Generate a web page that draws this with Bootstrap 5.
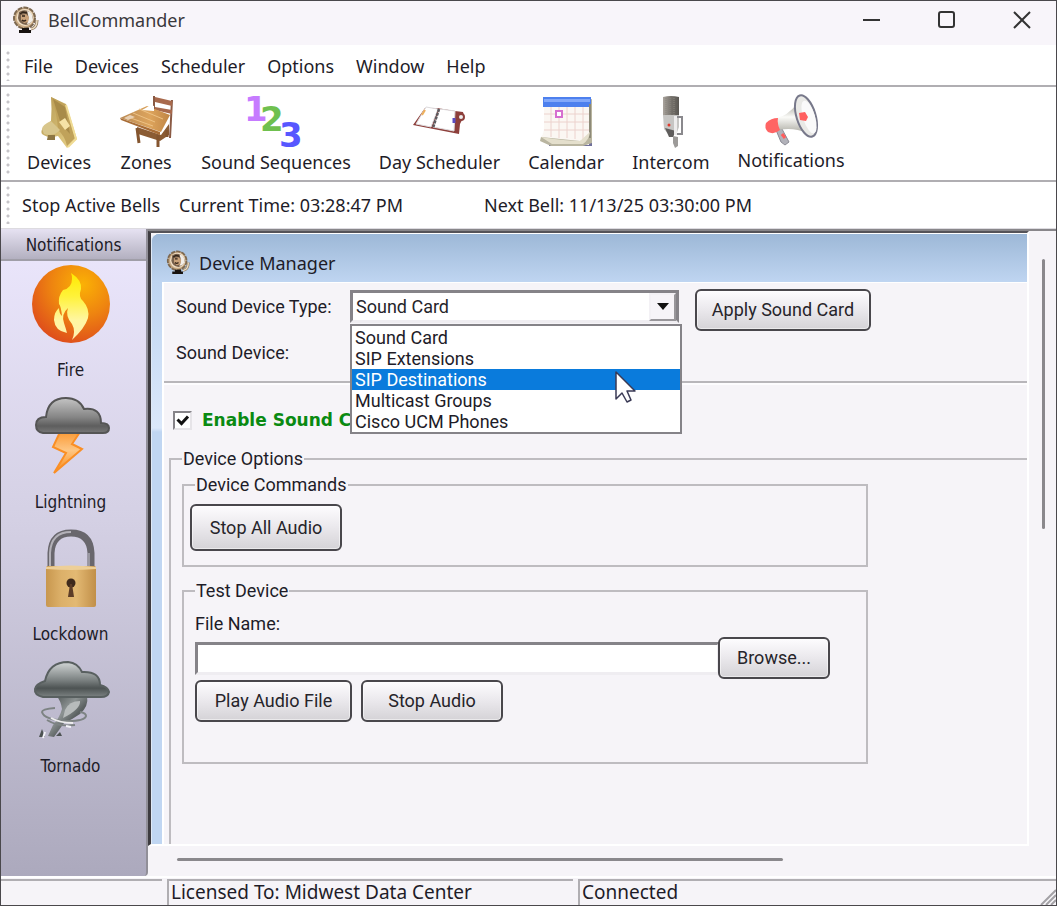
<!DOCTYPE html>
<html lang="en">
<head>
<meta charset="utf-8">
<meta name="viewport" content="width=device-width, initial-scale=1">
<title>BellCommander</title>
<link href="https://cdn.jsdelivr.net/npm/bootstrap@5.3.0/dist/css/bootstrap.min.css" rel="stylesheet">
<style>
  :root { --face: #f6f4f8; --ink: #1e1c28; }
  body { font-family: "Noto Sans", "Open Sans", sans-serif; font-size: 18px; line-height: 22px; color: var(--ink); background: var(--face); }
  button { color: inherit; }
  .app-window { border: 1px solid #4a484c; min-height: 100vh; }
  .title-strip { height: 44px; background: #f8f5fa; padding: 0 24px 6px 11px; color: #3a383c; }
  .caption-buttons { gap: 55px; }
  .flat { border: 0; background: none; padding: 0; text-decoration: none; color: inherit; white-space: nowrap; }
  .strip { background: #fff; border-bottom: 2px solid #b0aeb2; padding-left: 5px; }
  .grip { width: 4px; align-self: stretch; margin: 4px 0; background: radial-gradient(circle at 2px 2px, #c6c4c8 1px, #fff 2px) 0 0 / 4px 7px; }
  .menu-strip { height: 42px; gap: 22px; padding-top: 2px; }
  .menu-strip .grip { margin-right: -8px; }
  .tool-strip { height: 95px; gap: 28px; padding-top: 2px; }
  .tool-strip .grip { margin-right: -11px; }
  .tool-strip .flat svg { display: block; margin: 0 auto 3px; overflow: visible; }
  .info-strip { height: 47px; gap: 12px; border-bottom: 1px solid #dddbe0; }
  .info-strip .time-now { margin-left: 7px; }
  .info-strip .next-bell { margin-left: 69px; }

  .side-panel { width: 147px; border-right: 2px solid #918f98; background: linear-gradient(#ece7fd, #d4d0e4 45%, #aca9bd); font: 17px/22px "DejaVu Sans Condensed", "DejaVu Sans", sans-serif; border-bottom-right-radius: 4px; }
  .side-head { height: 32px; background: linear-gradient(#e6e2f2, #b3b0c0); border-bottom: 2px solid #a09ea8; padding-top: 5px; }
  .side-item { margin: 0 auto 15px; padding-right: 6px; }
  .side-item svg { display: block; margin: 0 auto 15px; }
  .side-list { padding-top: 3px; }

  .mdi-area { border-top: 2px solid #88868a; min-width: 0; }
  .mdi-client { border: 2px solid #fff; border-top-color: #555358; border-left: 3px solid #3d3b40; min-width: 0; }
  .v-scroll { width: 27px; padding: 28px 0 0 13px; }
  .v-scroll span { display: block; width: 3px; height: 270px; background: #8a888c; border-radius: 2px; }
  .h-scroll { height: 30px; padding: 12px 0 0 29px; }
  .h-scroll span { display: block; width: 606px; max-width: 70%; height: 3px; background: #8a888c; border-radius: 2px; }

  .child-window { border-top: 1px solid #fff; border-left: 1px solid #dfe9f6; border-top-left-radius: 8px; background: linear-gradient(#9db8d7, #bfd5f1 49px, #dbe8fa 194px, #c0d6f2 198px); }
  .child-title { height: 48px; padding: 13px 0 0 14px; background: linear-gradient(#9db8d7, #bfd5f1); border-top-left-radius: 7px; }
  .child-body { margin-left: 10px; background: var(--face); border: solid #fff; border-width: 1px 0 0 2px; font: 18px/22px Roboto, "Liberation Sans", sans-serif; }

  .form-top { padding: 6px 0 18px 12px; border-bottom: 2px solid #b8b6ba; }
  .form-grid { display: grid; grid-template-columns: 174px 329px; grid-template-rows: 34px 22px; row-gap: 18px; align-items: center; }
  .form-grid > label, .form-grid > span { padding-top: 2px; }
  .sunken { border: 3px solid; border-color: #858388 #efedf1 #efedf1 #858388; background: #fff; border-radius: 0; }
  .type-select { appearance: none; width: 100%; height: 33px; padding: 1px 3px 0; color: #26242a; border-color: #858388 #858388 #efedf1 #858388; }
  .drop-face { position: absolute; right: 3px; top: 3px; width: 27px; height: 28px; background: var(--face); border: 2px solid; border-color: #f3f1f5 #98969a #98969a #f3f1f5; pointer-events: none; display: grid; place-items: center; }
  .drop-list { position: absolute; top: 34px; left: 0; width: 332px; margin: 0; padding: 1px 0 0; list-style: none; background: #fff; border: 2px solid #858388; line-height: 21px; z-index: 5; }
  .drop-list li { padding-left: 3px; }
  .drop-list .chosen { background: #0a7bdc; color: #fff; }
  .pointer { position: absolute; top: 80px; left: 264px; z-index: 6; }

  .push { height: 42px; border: 2px solid #49474c; border-radius: 6px; background: linear-gradient(#fdfcfe, #eceaee 45%, #d5d3d7); box-shadow: inset 0 0 0 1px rgba(255,255,255,.5); padding: 0; color: #26242a; font: inherit; }
  .w-apply { width: 176px; margin-left: 16px; }
  .w-stopall { width: 152px; height: 47px; }
  .w-browse { width: 112px; margin-left: -2px; }
  .w-play { width: 157px; }
  .w-stop { width: 142px; }

  .form-bottom { padding: 24px 0 0 5px; border-top: 2px solid #fdfcfe; }
  .enable-row { gap: 10px; padding-left: 4px; height: 22px; margin-bottom: 17px; color: #0a8a12; font: bold 17px/22px "DejaVu Sans", sans-serif; }
  .tick { appearance: none; width: 19px; height: 19px; margin: 0; border: 2px solid; border-color: #858388 #e6e4e8 #e6e4e8 #858388; background: #fff url("data:image/svg+xml,%3Csvg xmlns='http://www.w3.org/2000/svg' viewBox='0 0 15 15'%3E%3Cpath d='M2.5 6.5l4 4 6.5-7' fill='none' stroke='%23111' stroke-width='3'/%3E%3C/svg%3E"); }
  fieldset { border: 2px solid #bebcc0; min-width: 0; }
  legend { float: none; width: auto; font-size: 18px; line-height: 22px; margin: 0; padding: 0 1px; }
  .outer-set { border-right: 0; border-bottom: 0; padding-left: 11px; }
  .inner-set { width: 686px; max-width: 100%; }
  .cmd-set { margin-top: 4px; padding: 8px 0 14px 6px; }
  .cmd-set legend { margin-left: 5px; }
  .test-set { margin-top: 13px; padding: 11px 36px 40px 11px; }
  .file-label { display: block; margin-bottom: 2px; }
  .file-box { height: 33px; min-width: 0; }
  .play-row { gap: 9px; margin-top: 1px; }

  .status-strip { height: 29px; font-size: 19px; line-height: 22px; border-top: 2px solid #fff; padding-top: 1px; gap: 5px; }
  .pane { border-top: 2px solid #b0aeb2; border-left: 2px solid #b0aeb2; padding-left: 2px; }
  .pane-a { width: 161px; border-left: 0; }
  .pane-b { width: 406px; }
</style>
</head>
<body>
<svg width="0" height="0" class="position-absolute" aria-hidden="true">
  <defs>
    <linearGradient id="gold" x1="0" x2="1" y1="0" y2="1"><stop offset="0" stop-color="#b79a55"/><stop offset=".5" stop-color="#cdb46c"/><stop offset="1" stop-color="#ecd58c"/></linearGradient>
    <linearGradient id="wood" x1="0" x2="1"><stop offset="0" stop-color="#b98a55"/><stop offset=".6" stop-color="#dda45c"/><stop offset="1" stop-color="#c08545"/></linearGradient>
    <linearGradient id="cloud" x1="0" x2="0" y1="0" y2="1"><stop offset="0" stop-color="#c4c4c4"/><stop offset=".55" stop-color="#858585"/><stop offset=".8" stop-color="#5e5e5e"/><stop offset="1" stop-color="#777"/></linearGradient>
    <linearGradient id="storm" x1="0" x2="0" y1="0" y2="1"><stop offset="0" stop-color="#d2d6d6"/><stop offset=".5" stop-color="#7e8484"/><stop offset=".75" stop-color="#4d5353"/><stop offset="1" stop-color="#7c8282"/></linearGradient>
    <linearGradient id="funnel" x1="0" x2="1" y1="0" y2="1"><stop offset="0" stop-color="#3f4545"/><stop offset=".4" stop-color="#8c9292"/><stop offset=".6" stop-color="#5a6060"/><stop offset="1" stop-color="#6d7373"/></linearGradient>
    <linearGradient id="bolt" x1="0" x2="0" y1="0" y2="1"><stop offset="0" stop-color="#fb9a35"/><stop offset=".45" stop-color="#fdc684"/><stop offset="1" stop-color="#fb8a14"/></linearGradient>
    <radialGradient id="fire" cx=".65" cy=".25" r=".8"><stop offset="0" stop-color="#fbb105"/><stop offset=".5" stop-color="#ee8410"/><stop offset="1" stop-color="#de4c1c"/></radialGradient>
    <linearGradient id="flame" x1="0" x2="0" y1="0" y2="1"><stop offset="0" stop-color="#ffe900"/><stop offset=".35" stop-color="#fff23a"/><stop offset=".7" stop-color="#fff6a0"/><stop offset="1" stop-color="#fff0b0"/></linearGradient>
    <linearGradient id="brass" x1="0" x2="1"><stop offset="0" stop-color="#c8974e"/><stop offset=".3" stop-color="#dcb069"/><stop offset=".6" stop-color="#e3b973"/><stop offset="1" stop-color="#c18f48"/></linearGradient>
    <linearGradient id="steel" x1="0" x2="1"><stop offset="0" stop-color="#aaa49d"/><stop offset=".5" stop-color="#77736d"/><stop offset="1" stop-color="#5a5752"/></linearGradient>
    <linearGradient id="horn" x1="0" x2="0" y1="0" y2="1"><stop offset="0" stop-color="#a9a89f"/><stop offset=".45" stop-color="#fbfbf8"/><stop offset="1" stop-color="#aeada4"/></linearGradient>
    <symbol id="bell-app" viewBox="0 0 28 28">
      <circle cx="12.500" cy="12" r="10.500" fill="#c8a982" stroke="#7d6850" stroke-width="2" stroke-dasharray="5 1"/>
      <circle cx="13" cy="11.500" r="8.500" fill="#f1dfc6"/>
      <path d="M7 6q4-3 9-1 5 3 5 8-2 5-7 6-7-1-8-7z" fill="#78614c"/>
      <path d="M15 5q6 1 6 9-3 4-6 4 3-6 0-13z" fill="#f3eee8"/>
      <path d="M9 9l5-1 3 3-1 5-4 1-3-3z" fill="#caa27a"/>
      <path d="M10 10h3m-3 4q2 2 4 0M8 8l3-2 4 1" stroke="#33251a" stroke-width="1.500" fill="none"/>
      <path d="M7 24h3v-2h7v2h2v3H7z" fill="#17120f"/>
      <path d="M19 23q6-1 6-9" fill="none" stroke="#8a745a" stroke-width="3"/><path d="M19 23q6-1 6-9" fill="none" stroke="#ecdcc0" stroke-width="1.500"/>
    </symbol>
  </defs>
</svg>

<div class="app-window d-flex flex-column">
  <header class="title-strip d-flex align-items-center">
    <svg width="28" height="28" class="me-2" aria-hidden="true"><use href="#bell-app"/></svg>
    <span>BellCommander</span>
    <div class="caption-buttons d-flex ms-auto">
      <button class="flat d-flex" aria-label="Minimize"><svg width="20" height="20"><path d="M1 10h17" stroke="#333" stroke-width="2"/></svg></button>
      <button class="flat d-flex" aria-label="Maximize"><svg width="20" height="20"><rect x="2" y="2" width="15" height="15" rx="2" fill="none" stroke="#333" stroke-width="2"/></svg></button>
      <button class="flat d-flex" aria-label="Close"><svg width="20" height="20"><path d="M2 2l16 16M18 2L2 18" stroke="#333" stroke-width="2"/></svg></button>
    </div>
  </header>

  <nav class="strip menu-strip d-flex align-items-center" aria-label="Main menu">
    <span class="grip"></span>
    <a href="#" class="flat">File</a><a href="#" class="flat">Devices</a><a href="#" class="flat">Scheduler</a><a href="#" class="flat">Options</a><a href="#" class="flat">Window</a><a href="#" class="flat">Help</a>
  </nav>

  <div class="strip tool-strip d-flex align-items-center" role="toolbar" aria-label="Tools">
    <span class="grip"></span>
    <button class="flat"><svg width="54" height="52" viewBox="0 0 54 52">
      <path d="M19 1l15 7 11 35-10 9-9-12q-10 3-16-2-3-5 9-13 1-12 0-24z" fill="url(#gold)"/>
      <path d="M19 1l15 8 9 33-8 8q-2-10-9-16-1-18-7-33z" fill="#c0a25a"/>
      <path d="M21 3l12 8 5 27-9-10z" fill="#a88b49"/><path d="M27 26l6-4 5 8-5 4z" fill="#f6e3a6"/>
      <path d="M10 33q0-4 9-8l9 9q-6 7-16 4z" fill="#d8c68c"/><path d="M16 39h7v5h-8z" fill="#8d7642"/>
      <path d="M34 9l10 34-8 8" fill="none" stroke="#f0dc95" stroke-width="2"/></svg>Devices</button>
    <button class="flat"><svg width="54" height="52" viewBox="0 0 54 52">
      <path d="M35 0v19M53 4l-2 38" stroke="#8a5a44" stroke-width="2"/><path d="M36 1l17 4v5l-17-4zM36 11l17 3v4l-17-4z" fill="#a8694c"/>
      <path d="M18 31l24 8 8-11v11l-9 6-22-7z" fill="#8b5c34"/>
      <path d="M1 22L28 10l23 9-9 17z" fill="url(#wood)"/><path d="M1 22l40 14v3L2 24z" fill="#a86c35"/>
      <path d="M14 17l22 9M20 13l24 10M9 21l25 9" stroke="#edc183" stroke-width="1"/>
      <path d="M18 32l2 15M39 39v12M48 34v7" stroke="#84552f" stroke-width="3"/><path d="M23 14l9-5 3 1v5z" fill="#fff"/><path d="M5 22l6-3 5 2-7 3z" fill="#e9d0b3"/></svg>Zones</button>
    <button class="flat"><svg width="54" height="52" viewBox="0 0 54 52" font-family="DejaVu Sans" font-weight="bold" font-size="34">
      <text x="-5" y="25" fill="#c67bff">1</text><text x="11" y="35" fill="#6fc04f">2</text><text x="30" y="51" fill="#5757ff">3</text></svg>Sound Sequences</button>
    <button class="flat"><svg width="54" height="52" viewBox="0 0 54 52">
      <path d="M13 12L1 29l46 9 1-10 4-8-1-4-8-1-18-3z" fill="#8d3f3b"/>
      <path d="M14 11l12 2-7 18-15-3zM28 13l15 2-1 20-21-4z" fill="#fff" stroke="#dddadc"/>
      <path d="M27 13l-6 19" stroke="#5d5b5f" stroke-width="2.500" stroke-dasharray="3 1"/><circle cx="49" cy="21" r="3" fill="#eee" stroke="#8d3f3b" stroke-width="2"/>
      <path d="M13 14l-3 5" stroke="#eeb05c" stroke-width="2"/><path d="M42 22v5" stroke="#5a4cc0" stroke-width="3"/></svg>Day Scheduler</button>
    <button class="flat"><svg width="54" height="52" viewBox="0 0 54 52">
      <path d="M10 49h40l3-46v47H10z" fill="#6f6f9a"/><path d="M50 4l3-1v44l-9 3H12L1 45l1-4h43z" fill="#b9b5a0"/>
      <path d="M5 2h46v35q-4 7-10 8L2 41q3-3 3-10z" fill="#fbf7f3"/>
      <path d="M5 18h46M5 26h46M5 34h45M12 11v30M20 11v31M28 11v31M36 11v32M44 11v32" stroke="#ecd2cd" stroke-width="1"/>
      <path d="M4 1h48v10H4z" fill="#4d80ee"/><path d="M5 3h46v3H5z" fill="#82a8fa"/><rect x="17" y="15" width="6" height="6" fill="#fff" stroke="#d66fd0" stroke-width="2"/>
      <path d="M51 8v34" stroke="#8d8a78" stroke-width="2"/>
      <path d="M2 41q25 4 39 4l10-9q-1 8-7 12H13z" fill="#e4dfcc"/></svg>Calendar</button>
    <button class="flat"><svg width="54" height="52" viewBox="0 0 54 52">
      <path d="M19 1q8-2 16 0v19H19z" fill="url(#steel)"/><path d="M22 2v18M26 2v18M30 2v18" stroke="#8a867f" stroke-dasharray="1 1"/>
      <path d="M19 19h16v12l-3 8h-7l-5-6z" fill="#c6c5c3"/><path d="M21 32l11 3-3 6h-4z" fill="#5f5d5c"/><circle cx="25" cy="29" r="1.500" fill="#e03c30"/>
      <path d="M33 21h5v17h-6" fill="none" stroke="#8a898d" stroke-width="2"/><path d="M30 20h3v19h-3z" fill="#edecec"/><path d="M29 40l5 1v9l-3 2-2-5z" fill="#9d9b99"/></svg>Intercom</button>
    <button class="flat pb-1"><svg width="54" height="52" viewBox="0 0 54 52">
      <path d="M12 36l6-1 7 13-4 3-4-3z" fill="#b2b2ba" stroke="#8c8c96"/><path d="M18 40l3 4" stroke="#ff5c5c" stroke-width="3"/>
      <path d="M13 24q10-2 20-14l10 29q-14-6-28-3z" fill="url(#horn)"/><path d="M2 29q5-5 12-5-1 5 2 12-6 5-12 2-4-4-2-9z" fill="#ff6464"/>
      <ellipse cx="42" cy="22" rx="9.500" ry="21.500" transform="rotate(-17 42 22)" fill="#e9e9e6" stroke="#77788a" stroke-width="2"/>
      <ellipse cx="45" cy="23" rx="6" ry="17" transform="rotate(-17 45 23)" fill="#fafafa"/><path d="M35 19l6-1 3 5-2 4-6-1z" fill="#ff5f5f"/></svg>Notifications</button>
  </div>

  <div class="strip info-strip d-flex align-items-center">
    <span class="grip"></span>
    <button class="flat">Stop Active Bells</button>
    <span class="time-now text-nowrap">Current Time: 03:28:47 PM</span>
    <span class="next-bell text-nowrap">Next Bell: 11/13/25 03:30:00 PM</span>
  </div>

  <div class="d-flex flex-grow-1">
    <aside class="side-panel flex-shrink-0">
      <div class="side-head text-center">Notifications</div>
      <div class="side-list">
        <button class="flat side-item d-block"><svg width="80" height="80" viewBox="0 0 80 80">
          <circle cx="40" cy="40" r="39" fill="url(#fire)"/>
          <path d="M40 9q11 7 10 16-3 8 2 12 7 8 5 17-3 10-16 22 4-9 0-16-7-8-4-16-7 6-4 15 2 6 3 10-12-2-13-13 0-8 5-12 0 5 3 8-1-10-3-12-1-8 4-14 9-2 9-11 0-4-1-6z" fill="url(#flame)"/></svg>Fire</button>
        <button class="flat side-item d-block"><svg width="80" height="80" viewBox="0 0 80 80">
          <path d="M29 36h20l-8 12 10 5-28 24 12-20-13-6z" fill="url(#bolt)" stroke="#fa8f25" stroke-width="2"/>
          <path d="M12 37q-7-1-7-8 0-8 10-8Q17 2 35 2q13 0 18 11 17-2 17 14 8 0 8 5 0 5-6 5z" fill="url(#cloud)" stroke="#555" stroke-width="2"/></svg>Lightning</button>
        <button class="flat side-item d-block"><svg width="80" height="80" viewBox="0 0 80 80">
          <path d="M20 42V25Q21 5 40 5t20 20v17" fill="none" stroke="#69676d" stroke-width="7"/><path d="M19 42V25Q20 4 40 4" fill="none" stroke="#b3b1b8" stroke-width="2"/><path d="M58 42V25" stroke="#9997a0" stroke-width="2"/>
          <rect x="15" y="38" width="50" height="41" rx="2" fill="url(#brass)"/><path d="M15 39q25-3 50 0v2q-25 2-50 0z" fill="#edcf98"/>
          <circle cx="40" cy="55" r="4.500" fill="#3f2a1c"/><path d="M39 56h2l2 13h-6z" fill="#5d3d27"/></svg>Lockdown</button>
        <button class="flat side-item d-block"><svg width="80" height="80" viewBox="0 0 80 80">
          <path d="M25 36h31q2 10-7 18-7 5-16 9l-10 14-6-1 5-11q7-8 9-16-1-8-6-14z" fill="url(#funnel)"/>
          <path d="M34 50q4-9 15-9 1 8-17 17z" fill="#b7bbbb"/>
          <path d="M24 48q-13 1-13 4 2 8 26 9 17 0 18-5 0-3-6-4M16 60q11 7 28 5" fill="none" stroke="#7d8383" stroke-width="2"/><path d="M20 58q9 5 22 5" fill="none" stroke="#eee" stroke-width="2"/>
          <path d="M8 77l3-8 3 8zM25 76l4-4 2 4z" fill="#4d5353"/><path d="M14 72l-2 6M35 66l5 1" stroke="#f4f4fa" stroke-width="2"/>
          <path d="M12 37q-9-2-8-8 1-5 10-8Q18 2 37 2q10 1 14 10 18-1 18 13 8 2 9 7-1 5-8 5z" fill="url(#storm)" stroke="#596060" stroke-width="2"/></svg>Tornado</button>
      </div>
    </aside>

    <main class="mdi-area d-flex flex-column flex-grow-1">
      <div class="d-flex flex-grow-1">
        <section class="mdi-client d-flex flex-grow-1 overflow-hidden">
          <div class="child-window d-flex flex-column flex-grow-1">
            <div class="child-title d-flex align-items-center">
              <svg width="25" height="25" class="me-2 mb-1" aria-hidden="true"><use href="#bell-app"/></svg><span class="mb-1">Device Manager</span>
            </div>
            <form class="child-body d-flex flex-column flex-grow-1" onsubmit="return false">
              <div class="form-top d-flex align-items-start">
                <div class="form-grid">
                  <label for="devtype">Sound Device Type:</label>
                  <div class="position-relative">
                    <select id="devtype" class="sunken type-select">
                      <option>Sound Card</option><option>SIP Extensions</option><option>SIP Destinations</option><option>Multicast Groups</option><option>Cisco UCM Phones</option>
                    </select>
                    <span class="drop-face"><svg width="12" height="7"><path d="M0 0h12L6 7z" fill="#111"/></svg></span>
                    <ul class="drop-list">
                      <li>Sound Card</li><li>SIP Extensions</li><li class="chosen">SIP Destinations</li><li>Multicast Groups</li><li>Cisco UCM Phones</li>
                    </ul>
                    <svg class="pointer" width="24" height="36" viewBox="0 0 24 36" aria-hidden="true"><path d="M2 2v27l6-6 5 9 4-2-4-9h8z" fill="#fff" stroke="#3a3a55" stroke-width="1.500" stroke-linejoin="round"/></svg>
                  </div>
                  <span>Sound Device:</span>
                </div>
                <button class="push w-apply">Apply Sound Card</button>
              </div>
              <div class="form-bottom d-flex flex-column flex-grow-1">
                <div class="enable-row d-flex align-items-center">
                  <input type="checkbox" class="tick" id="enable" checked><label for="enable">Enable Sound C</label>
                </div>
                <fieldset class="outer-set flex-grow-1">
                  <legend>Device Options</legend>
                  <fieldset class="inner-set cmd-set">
                    <legend>Device Commands</legend>
                    <button class="push w-stopall">Stop All Audio</button>
                  </fieldset>
                  <fieldset class="inner-set test-set">
                    <legend>Test Device</legend>
                    <label for="file" class="file-label">File Name:</label>
                    <div class="d-flex align-items-center">
                      <input id="file" type="text" class="sunken file-box flex-grow-1"><button class="push w-browse">Browse...</button>
                    </div>
                    <div class="play-row d-flex">
                      <button class="push w-play">Play Audio File</button><button class="push w-stop">Stop Audio</button>
                    </div>
                  </fieldset>
                </fieldset>
              </div>
            </form>
          </div>
        </section>
        <div class="v-scroll flex-shrink-0"><span></span></div>
      </div>
      <div class="h-scroll"><span></span></div>
    </main>
  </div>

  <footer class="status-strip d-flex">
    <div class="pane pane-a"></div>
    <div class="pane pane-b text-nowrap">Licensed To: Midwest Data Center</div>
    <div class="pane flex-grow-1 d-flex justify-content-between align-items-start"><span>Connected</span>
      <svg width="16" height="18" class="align-self-end" aria-hidden="true"><path d="M1 18L16 3M6 18l10-10M11 18l5-5" stroke="#a3a1a6" stroke-width="2"/></svg></div>
  </footer>
</div>
<script src="https://cdn.jsdelivr.net/npm/bootstrap@5.3.0/dist/js/bootstrap.bundle.min.js"></script>
</body>
</html>
